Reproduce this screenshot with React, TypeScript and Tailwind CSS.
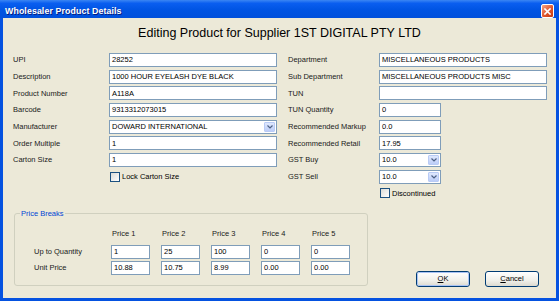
import React from "react";

const font = "font-['Liberation_Sans',Arial,sans-serif]";

const Input: React.FC<{ value?: string; className?: string }> = ({ value, className }) => (
    <div
        className={
            "h-[14px] border border-[#7f9db9] bg-white pl-[2px] flex items-center text-[7.5px] leading-none text-black whitespace-nowrap overflow-hidden " +
            (className || "")
        }
    >
        {value}
    </div>
);

const Combo: React.FC<{ value: string; className?: string }> = ({ value, className }) => (
    <div
        className={
            "h-[14px] border border-[#7f9db9] bg-white pl-[2px] pr-[1px] flex items-center text-[7.5px] leading-none text-black whitespace-nowrap " +
            (className || "")
        }
    >
        <span>{value}</span>
        <div className="ml-auto h-[10px] w-[11px] rounded-[1px] border border-[#b9cbf5] bg-[linear-gradient(to_bottom,#dfe8fd,#bccdf8)] flex items-center justify-center">
            <svg width="6" height="4" viewBox="0 0 6 4">
                <path d="M0.5 0.5 L3 3 L5.5 0.5" fill="none" stroke="#4d6185" strokeWidth="1.2" />
            </svg>
        </div>
    </div>
);

const Check: React.FC<{ label: string }> = ({ label }) => (
    <div className="flex items-center gap-[2px] h-[14px]">
        <div className="w-[10px] h-[10px] border border-[#1c5180] bg-[linear-gradient(135deg,#dcdcd7,#ffffff)]" />
        <span className="text-[7.5px] leading-none">{label}</span>
    </div>
);

const Label: React.FC<{ children: React.ReactNode }> = ({ children }) => (
    <div className="h-[14px] flex items-center text-[7.5px] leading-none text-[#1a1a1a] whitespace-nowrap">
        {children}
    </div>
);

const XpButton: React.FC<{ children: React.ReactNode; focused?: boolean }> = ({ children, focused }) => (
    <div className="w-[54px] h-[16px] rounded-[3px] border border-[#003c74] bg-[linear-gradient(to_bottom,#ffffff,#f0f0ea_60%,#dcdad0)] flex items-center justify-center">
        <div
            className={
                focused
                    ? "w-full h-full rounded-[2px] border border-[#a9c3f4] flex items-center justify-center text-[7.5px] leading-none"
                    : "w-full h-full flex items-center justify-center text-[7.5px] leading-none"
            }
        >
            {children}
        </div>
    </div>
);

export default function App() {
    const prices = [
        { name: "Price 1", qty: "1", unit: "10.88" },
        { name: "Price 2", qty: "25", unit: "10.75" },
        { name: "Price 3", qty: "100", unit: "8.99" },
        { name: "Price 4", qty: "0", unit: "0.00" },
        { name: "Price 5", qty: "0", unit: "0.00" },
    ];

    return (
        <div className={"w-[559px] h-[301px] bg-[#0552e0] flex flex-col overflow-hidden " + font}>
            {/* title bar */}
            <div className="h-[18px] shrink-0 bg-[linear-gradient(to_bottom,#3b86f3_0%,#0a5ef0_18%,#0054e3_55%,#0050dc_100%)] flex items-start pl-[5px] pr-[5px]">
                <div className="pt-[7px] text-[8.8px] leading-none font-bold text-white tracking-[0.1px] [text-shadow:1px_1px_0_#0a1e7e]">
                    Wholesaler Product Details
                </div>
                <div className="ml-auto mt-[4px] w-[13px] h-[14px] rounded-[2px] border border-white bg-[linear-gradient(135deg,#f4a486,#e0552c_55%,#c33a10)] flex items-center justify-center relative z-10">
                    <svg width="7" height="7" viewBox="0 0 7 7">
                        <path d="M1 1 L6 6 M6 1 L1 6" stroke="white" strokeWidth="1.6" strokeLinecap="square" />
                    </svg>
                </div>
            </div>

            {/* body */}
            <div className="flex-1 mx-[3px] mb-[3px] bg-[#ece9d8] flex flex-col text-black">
                <div className="pt-[8px] h-[22px] text-center text-[12.5px] leading-[14px]">
                    Editing Product for Supplier 1ST DIGITAL PTY LTD
                </div>

                <div className="mt-[13px] flex">
                    <div className="ml-[10px] grid grid-cols-[96px_168px] auto-rows-[14px] gap-y-[2.67px]">
                        <Label>UPI</Label>
                        <Input value="28252" />
                        <Label>Description</Label>
                        <Input value="1000 HOUR EYELASH DYE BLACK" />
                        <Label>Product Number</Label>
                        <Input value="A118A" />
                        <Label>Barcode</Label>
                        <Input value="9313312073015" />
                        <Label>Manufacturer</Label>
                        <Combo value="DOWARD INTERNATIONAL" />
                        <Label>Order Multiple</Label>
                        <Input value="1" />
                        <Label>Carton Size</Label>
                        <Input value="1" />
                        <div />
                        <div className="pl-[1px]">
                            <Check label="Lock Carton Size" />
                        </div>
                    </div>

                    <div className="ml-[11px] grid grid-cols-[91px_168px] auto-rows-[14px] gap-y-[2.67px]">
                        <Label>Department</Label>
                        <Input value="MISCELLANEOUS PRODUCTS" />
                        <Label>Sub Department</Label>
                        <Input value="MISCELLANEOUS PRODUCTS MISC" />
                        <Label>TUN</Label>
                        <Input value="" />
                        <Label>TUN Quantity</Label>
                        <Input value="0" className="w-[62px]" />
                        <Label>Recommended Markup</Label>
                        <Input value="0.0" className="w-[62px]" />
                        <Label>Recommended Retail</Label>
                        <Input value="17.95" className="w-[62px]" />
                        <Label>GST Buy</Label>
                        <Combo value="10.0" className="w-[62px]" />
                        <Label>GST Sell</Label>
                        <Combo value="10.0" className="w-[62px]" />
                        <div />
                        <div className="pl-[1px]">
                            <Check label="Discontinued" />
                        </div>
                    </div>
                </div>

                <div className="mt-[12.7px] flex items-end pr-[17px]">
                    {/* price breaks group */}
                    <div className="ml-[11px] w-[354px] h-[73px] rounded-[3px] border border-[#d0d0bf] relative pt-[13px] pl-[19px]">
                        <div className="absolute left-[5px] -top-[5px] px-[1px] bg-[#ece9d8] text-[7.5px] leading-[9px] text-[#0046d5]">
                            Price Breaks
                        </div>
                        <div className="grid grid-cols-[66px_repeat(5,39px)] gap-x-[11px]">
                            <div />
                            {prices.map((p) => (
                                <Label key={p.name}>
                                    <span className="pl-[1px]">{p.name}</span>
                                </Label>
                            ))}
                        </div>
                        <div className="mt-[4px] grid grid-cols-[66px_repeat(5,39px)] gap-x-[11px] gap-y-[2px] auto-rows-[14px]">
                            <Label>Up to Quantity</Label>
                            {prices.map((p) => (
                                <Input key={p.name} value={p.qty} />
                            ))}
                            <Label>Unit Price</Label>
                            {prices.map((p) => (
                                <Input key={p.name} value={p.unit} />
                            ))}
                        </div>
                    </div>

                    <div className="ml-auto mb-[-1px] flex gap-[15px]">
                        <XpButton focused>
                            <span className="underline">O</span>K
                        </XpButton>
                        <XpButton>
                            <span className="underline">C</span>ancel
                        </XpButton>
                    </div>
                </div>
            </div>
        </div>
    );
}
